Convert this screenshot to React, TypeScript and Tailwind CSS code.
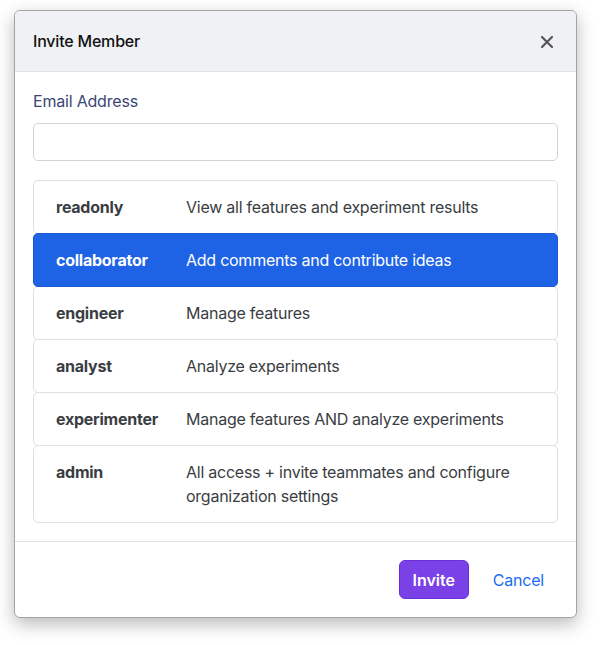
import React from "react";

const roles = [
  { name: "readonly", desc: "View all features and experiment results" },
  { name: "collaborator", desc: "Add comments and contribute ideas" },
  { name: "engineer", desc: "Manage features" },
  { name: "analyst", desc: "Analyze experiments" },
  { name: "experimenter", desc: "Manage features AND analyze experiments" },
  { name: "admin", desc: "All access + invite teammates and configure organization settings" },
];

export default function App() {
  const selected = "collaborator";
  return (
    <div className="w-[600px] h-[645px] bg-white pl-[14px] pt-[10px] font-['Inter',sans-serif]">
      <div className="w-[563px] flex flex-col bg-white border border-[#a3a3a3] rounded-[6px] overflow-hidden shadow-[0_6px_18px_rgba(0,0,0,0.28)]">
        <div className="h-[61px] shrink-0 flex items-center justify-between bg-[#f0f1f5] border-b border-[#dfe1e6] pl-[18px] pr-[22px]">
          <h1 className="text-[16px] font-medium text-[#111] tracking-[-0.2px]">Invite Member</h1>
          <svg width="14" height="14" viewBox="0 0 14 14" className="mt-[2px]">
            <path d="M2 2 L12 12 M12 2 L2 12" stroke="#555" strokeWidth="2.2" strokeLinecap="round" />
          </svg>
        </div>
        <div className="flex flex-col px-[18px] pt-[17px] pb-[18px] border-b border-[#dee2e6]">
          <label className="text-[16px] leading-[24px] text-[#3b4675] tracking-[-0.2px]">Email Address</label>
          <input className="mt-[10px] h-[38px] w-full border border-[#ced4da] rounded-[5px] outline-none px-3" />
          <div className="mt-[19px] flex flex-col">
            {roles.map((r) => {
              const sel = r.name === selected;
              return (
                <div
                  key={r.name}
                  className={
                    "flex items-start -mt-px first:mt-0 border rounded-[5px] pl-[22px] pr-4 py-[14px] text-[16px] leading-[24px] tracking-[-0.25px] " +
                    (sel
                      ? "bg-[#1e63e6] border-[#1857cf] text-white relative"
                      : "bg-white border-[#dcdfe3] text-[#3a3d42]")
                  }
                >
                  <div className="w-[130px] shrink-0 font-bold">{r.name}</div>
                  <div className="flex-1 pr-[10px]">{r.desc}</div>
                </div>
              );
            })}
          </div>
        </div>
        <div className="h-[75px] shrink-0 flex items-center justify-end pr-[20px] gap-[12px]">
          <button className="h-[39px] w-[70px] rounded-[6px] bg-[#7a42e6] border border-[#6a30d8] text-white text-[16px] font-semibold">
            Invite
          </button>
          <button className="px-[12px] text-[16px] text-[#1a6cf2] tracking-[-0.2px]">Cancel</button>
        </div>
      </div>
    </div>
  );
}
